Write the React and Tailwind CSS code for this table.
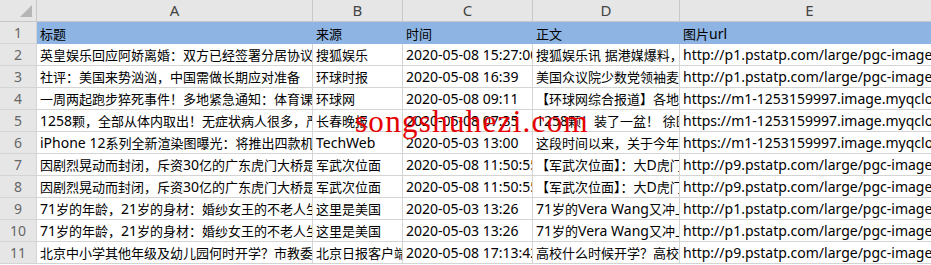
import React from "react";

const rows = [
  ["英皇娱乐回应阿娇离婚：双方已经签署分居协议", "搜狐娱乐", "2020-05-08 15:27:00", "搜狐娱乐讯 据港媒爆料，阿娇", "http://p1.pstatp.com/large/pgc-image/f0a1b2c3"],
  ["社评：美国来势汹汹，中国需做长期应对准备", "环球时报", "2020-05-08 16:39", "美国众议院少数党领袖麦卡锡", "http://p1.pstatp.com/large/pgc-image/4a5b6c7d"],
  ["一周两起跑步猝死事件！多地紧急通知：体育课", "环球网", "2020-05-08 09:11", "【环球网综合报道】各地中小学", "https://m1-1253159997.image.myqcloud.com/"],
  ["1258颗，全部从体内取出！无症状病人很多，严重", "长春晚报", "2020-05-08 07:35", "1258颗！装了一盆！ 徐医生", "https://m1-1253159997.image.myqcloud.com/"],
  ["iPhone 12系列全新渲染图曝光：将推出四款机型", "TechWeb", "2020-05-03 13:00", "这段时间以来，关于今年新款", "https://m1-1253159997.image.myqcloud.com/"],
  ["因剧烈晃动而封闭，斥资30亿的广东虎门大桥是军", "军武次位面", "2020-05-08 11:50:55", "【军武次位面】：大D虎门大桥", "http://p9.pstatp.com/large/pgc-image/4e5f6a7b"],
  ["因剧烈晃动而封闭，斥资30亿的广东虎门大桥是军", "军武次位面", "2020-05-08 11:50:55", "【军武次位面】：大D虎门大桥", "http://p9.pstatp.com/large/pgc-image/4e5f6a7b"],
  ["71岁的年龄，21岁的身材：婚纱女王的不老人生这", "这里是美国", "2020-05-03 13:26", "71岁的Vera Wang又冲上热搜", "http://p1.pstatp.com/large/pgc-image/7a8b9c0d"],
  ["71岁的年龄，21岁的身材：婚纱女王的不老人生这", "这里是美国", "2020-05-03 13:26", "71岁的Vera Wang又冲上热搜", "http://p1.pstatp.com/large/pgc-image/7a8b9c0d"],
  ["北京中小学其他年级及幼儿园何时开学？市教委发", "北京日报客户端", "2020-05-08 17:13:42", "高校什么时候开学？高校将", "http://p9.pstatp.com/large/pgc-image/5b6c7d8e"],
];

const header = ["标题", "来源", "时间", "正文", "图片url"];
const letters = ["A", "B", "C", "D", "E"];

function Mixed({ text }) {
  const parts = text.split(/([\u3000-\u303f\u4e00-\u9fff\uff00-\uffef]+)/).filter(Boolean);
  return parts.map((p, i) =>
    /[\u3000-\u303f\u4e00-\u9fff\uff00-\uffef]/.test(p) ? (
      <span key={i} className="text-[13px]">{p}</span>
    ) : (
      <span key={i} className="text-[14px]">{p}</span>
    )
  );
}

const font = { fontFamily: '"Noto Sans", "Noto Sans CJK SC", sans-serif' };

export default function App() {
  return (
    <div className="relative w-[931px] h-[265px] overflow-hidden bg-white text-black" style={font}>
      <div className="grid grid-cols-[37px_276px_90px_130px_147px_260px] grid-rows-[repeat(12,22px)]">
        <div className="relative bg-[#e6e6e6] border-r border-b border-[#c8c8c8]">
          <div className="absolute right-[4px] bottom-[4px] w-0 h-0 border-l-[12px] border-l-transparent border-b-[12px] border-b-[#b5b5b5]" />
        </div>
        {letters.map((l) => (
          <div key={l} className="bg-[#e6e6e6] border-r border-b border-[#c8c8c8] flex items-center justify-center text-[15px] text-[#444] leading-none">
            {l}
          </div>
        ))}
        <div className="bg-[#e6e6e6] border-r border-b border-[#d4d4d4] flex items-center justify-center text-[14px] text-[#666]">1</div>
        {header.map((h, i) => (
          <div key={i} className="bg-[#8db4e2] px-[3px] whitespace-nowrap overflow-hidden leading-[22px]">
            <Mixed text={h} />
          </div>
        ))}
        {rows.map((r, ri) => (
          <React.Fragment key={ri}>
            <div className="bg-[#e6e6e6] border-r border-b border-[#d4d4d4] flex items-center justify-center text-[14px] text-[#666]">
              {ri + 2}
            </div>
            {r.map((c, ci) => (
              <div key={ci} className="border-r border-b border-[#d4d4d4] px-[3px] whitespace-nowrap overflow-hidden leading-[21px]">
                <Mixed text={c} />
              </div>
            ))}
          </React.Fragment>
        ))}
      </div>
      <div
        className="absolute left-[355px] top-[106px] text-[31px] leading-none text-[#e60000] whitespace-nowrap pointer-events-none tracking-[1.3px]"
        style={{ fontFamily: '"Liberation Serif", serif' }}
      >
        songshuhezi.com
      </div>
    </div>
  );
}
